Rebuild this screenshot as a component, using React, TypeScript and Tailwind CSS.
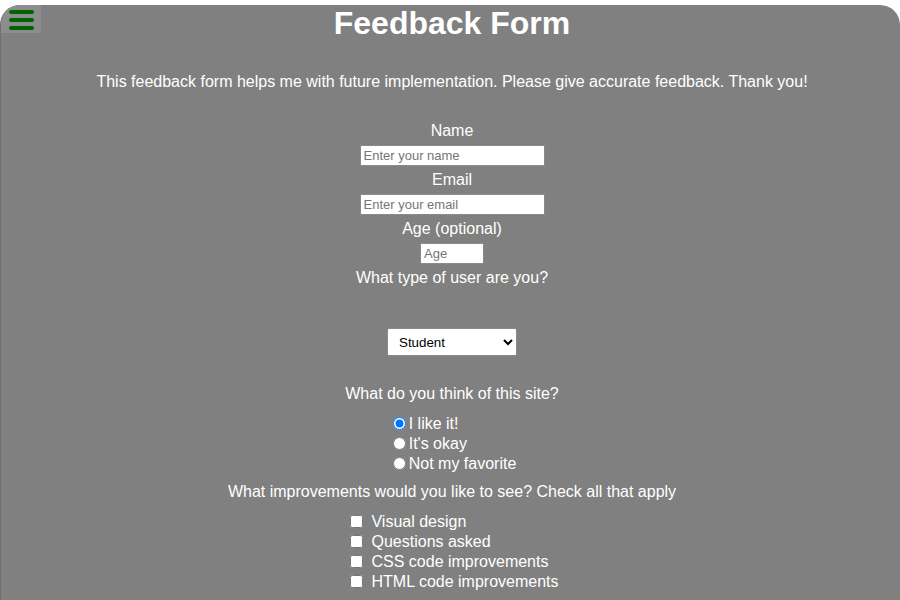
const improvements = [
  "Visual design",
  "Questions asked",
  "CSS code improvements",
  "HTML code improvements",
];

const opinions = ["I like it!", "It's okay", "Not my favorite"];

export default function App() {
  return (
    <div className="bg-white pt-[5px] font-['Liberation_Sans',Arial,sans-serif] text-white">
      <div className="relative min-h-[620px] overflow-hidden rounded-t-[20px] border-l border-[#707070] bg-[#808080] pl-[3px]">
        <button className="absolute left-0 top-0 flex h-[28px] w-[40px] flex-col gap-[4px] bg-[#8d8d8d] pl-[8px] pt-[5px]">
          <span className="block h-[4px] w-[25px] rounded-full bg-[#006400]" />
          <span className="block h-[4px] w-[25px] rounded-full bg-[#006400]" />
          <span className="block h-[4px] w-[25px] rounded-full bg-[#006400]" />
        </button>

        <h1 className="text-center text-[32px] font-bold leading-[37px]">Feedback Form</h1>
        <p className="mt-[31px] text-center text-[16px] leading-[18px]">
          This feedback form helps me with future implementation. Please give accurate feedback. Thank you!
        </p>

        <form className="flex flex-col items-center text-[16px] leading-[18px]">
          <label className="mt-[31px]">Name</label>
          <input
            type="text"
            placeholder="Enter your name"
            className="mt-[5px] h-[21px] w-[185px] border border-[#8a8a8a] bg-white px-[3px] text-[13px] text-black placeholder:text-[#757575]"
          />
          <label className="mt-[5px]">Email</label>
          <input
            type="email"
            placeholder="Enter your email"
            className="mt-[5px] h-[21px] w-[185px] border border-[#8a8a8a] bg-white px-[3px] text-[13px] text-black placeholder:text-[#757575]"
          />
          <label className="mt-[5px]">Age (optional)</label>
          <input
            type="number"
            placeholder="Age"
            className="mt-[5px] h-[21px] w-[64px] border border-[#8a8a8a] bg-white px-[3px] text-[13px] text-black placeholder:text-[#757575]"
          />
          <label className="mt-[5px]">What type of user are you?</label>
          <select
            defaultValue="student"
            className="mt-[41px] h-[28px] w-[130px] rounded-[2px] border border-[#8a8a8a] bg-white pl-[7px] text-[13.33px] text-black"
          >
            <option value="student">Student</option>
            <option value="teacher">Teacher</option>
            <option value="other">Other</option>
          </select>

          <p className="mt-[29px]">What do you think of this site?</p>
          <div className="mt-[11px] flex flex-col">
            {opinions.map((o, i) => (
              <label key={o} className="flex h-[20px] items-center">
                <input
                  type="radio"
                  name="opinion"
                  defaultChecked={i === 0}
                  className="mb-[2px] ml-[5px] mr-[3px] h-[13px] w-[13px]"
                />
                {o}
              </label>
            ))}
          </div>

          <p className="mt-[9px]">What improvements would you like to see? Check all that apply</p>
          <div className="mt-[11px] flex flex-col">
            {improvements.map((item) => (
              <label key={item} className="flex h-[20px] items-center">
                <input type="checkbox" className="mb-[2px] ml-[5px] mr-[8px] h-[13px] w-[13px]" />
                {item}
              </label>
            ))}
          </div>
        </form>
      </div>
    </div>
  );
}
